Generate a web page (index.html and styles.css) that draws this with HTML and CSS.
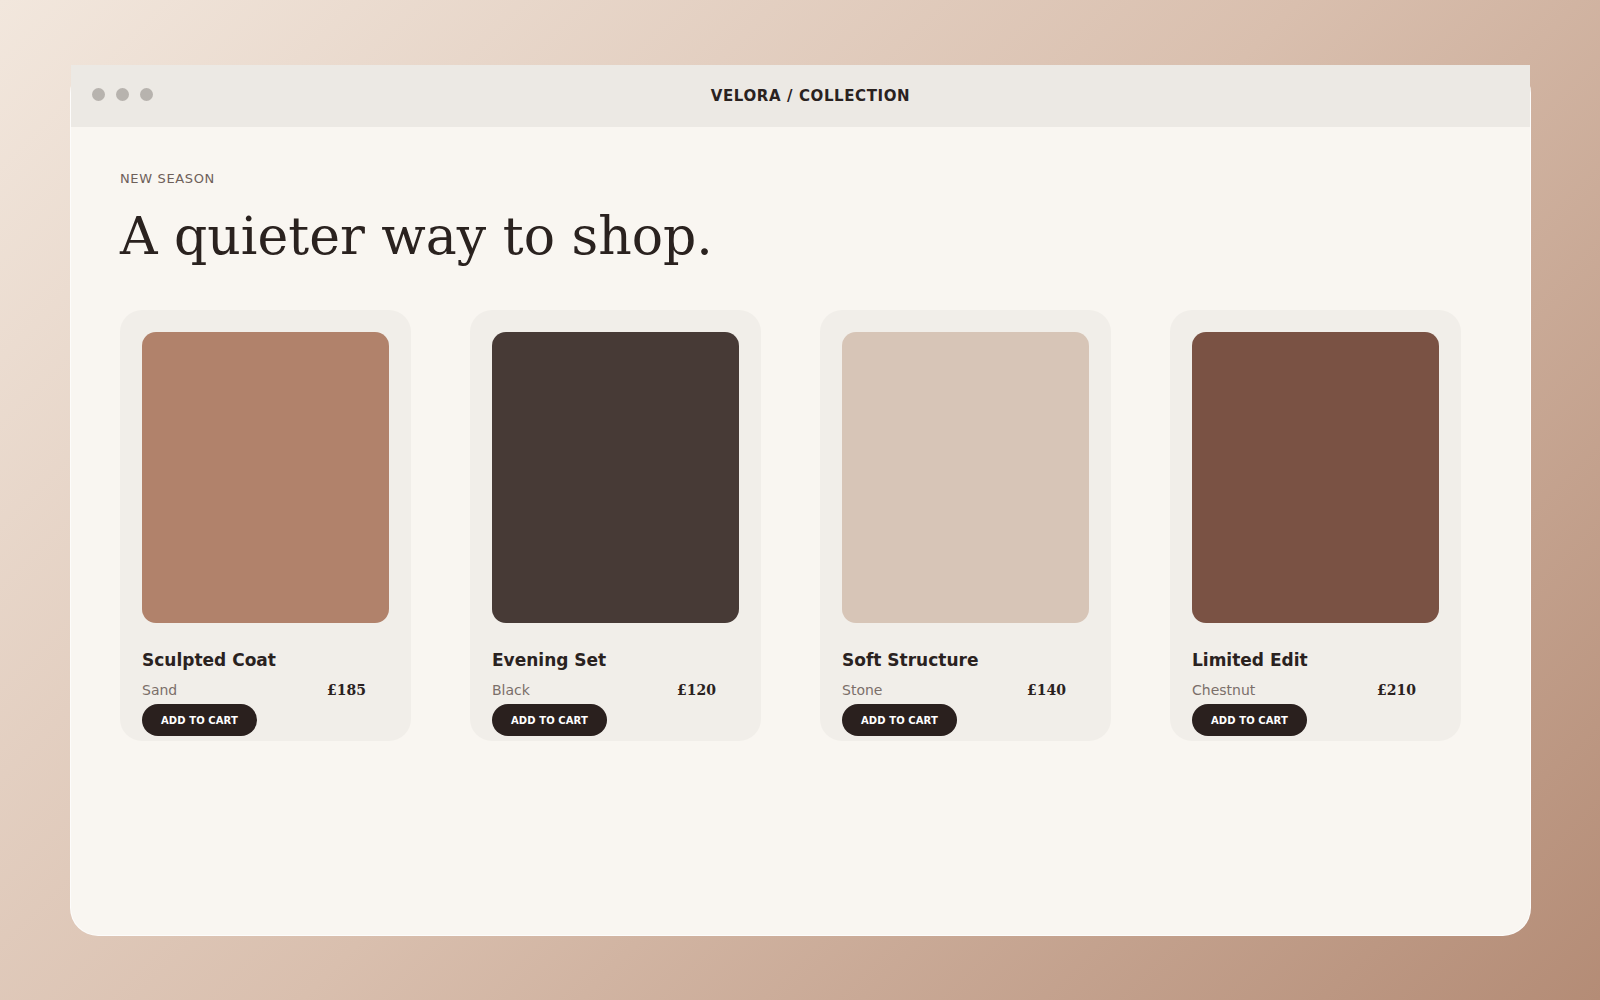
FILE: index.html
```html
<!DOCTYPE html>
<html lang="en">
<head>
    <meta charset="UTF-8">
    <meta name="viewport" content="width=device-width, initial-scale=1.0">
    <title>Velora / Collection</title>
    <link rel="stylesheet" href="styles.css">
</head>
<body>
    <div class="window">
        <div class="titlebar">
            <div class="dots">
                <span class="dot"></span>
                <span class="dot"></span>
                <span class="dot"></span>
            </div>
            <div class="window-title">VELORA / COLLECTION</div>
        </div>

        <div class="content">
            <p class="eyebrow">NEW SEASON</p>
            <h1>A quieter way to shop.</h1>

            <div class="products">
                <div class="card">
                    <div class="swatch sand"></div>
                    <h3>Sculpted Coat</h3>
                    <div class="meta">
                        <span class="colour">Sand</span>
                        <span class="price">£185</span>
                    </div>
                    <button class="add-btn">ADD TO CART</button>
                </div>

                <div class="card">
                    <div class="swatch black"></div>
                    <h3>Evening Set</h3>
                    <div class="meta">
                        <span class="colour">Black</span>
                        <span class="price">£120</span>
                    </div>
                    <button class="add-btn">ADD TO CART</button>
                </div>

                <div class="card">
                    <div class="swatch stone"></div>
                    <h3>Soft Structure</h3>
                    <div class="meta">
                        <span class="colour">Stone</span>
                        <span class="price">£140</span>
                    </div>
                    <button class="add-btn">ADD TO CART</button>
                </div>

                <div class="card">
                    <div class="swatch chestnut"></div>
                    <h3>Limited Edit</h3>
                    <div class="meta">
                        <span class="colour">Chestnut</span>
                        <span class="price">£210</span>
                    </div>
                    <button class="add-btn">ADD TO CART</button>
                </div>
            </div>
        </div>
    </div>
</body>
</html>
```

FILE: styles.css
```css
html, body {
    height: 100%;
}

body {
    margin: 0;
    padding: 65px 69px 64px 70px;
    box-sizing: border-box;
    background: linear-gradient(135deg, #f2e7dd 0%, #d9bfae 50%, #b48c76 100%);
    font-family: "DejaVu Sans", sans-serif;
    color: #2a221f;
}

.window {
    height: 871px;
    box-sizing: border-box;
    background-color: #f9f6f1;
    border: 1px solid rgba(255, 255, 255, 0.7);
    border-top: none;
    border-radius: 28px;
}

/* title bar keeps square corners on purpose */
.titlebar {
    height: 62px;
    display: flex;
    align-items: center;
    padding: 0 62px 0 21px;
    background-color: #ece9e4;
}

.dots {
    display: flex;
    gap: 11px;
    margin-bottom: 3px;
}

.dot {
    width: 13px;
    height: 13px;
    border-radius: 50%;
    background-color: #b7b3ae;
}

.window-title {
    flex: 1;
    text-align: center;
    font-size: 15px;
    font-weight: bold;
    letter-spacing: 0.04em;
    color: #2a221f;
}

.content {
    padding: 44px 49px;
}

.eyebrow {
    margin: 0 0 20px;
    font-size: 13px;
    letter-spacing: 0.05em;
    color: #6e605a;
}

h1 {
    margin: 0 0 44px;
    font-family: "DejaVu Serif", serif;
    font-size: 52px;
    font-weight: normal;
    color: #2a221f;
}

.products {
    display: grid;
    grid-template-columns: repeat(4, 291px);
    gap: 59px;
}

.card {
    padding: 22px 22px 5px;
    background-color: #f1eee9;
    border-radius: 22px;
}

.swatch {
    height: 291px;
    border-radius: 14px;
}

.sand { background-color: #b1826b; }
.black { background-color: #473a36; }
.stone { background-color: #d7c5b7; }
.chestnut { background-color: #7a5244; }

.card h3 {
    margin: 27px 0 0;
    font-size: 17px;
    font-weight: bold;
    color: #2a221f;
}

.meta {
    display: flex;
    justify-content: space-between;
    align-items: baseline;
    margin-top: 12px;
    padding-right: 23px;
}

.colour {
    font-size: 14px;
    color: #7b6f69;
}

.price {
    font-family: "DejaVu Serif", serif;
    font-size: 14px;
    font-weight: bold;
    color: #2a221f;
}

.add-btn {
    display: block;
    height: 32px;
    margin-top: 6px;
    padding: 0 19px;
    border: none;
    border-radius: 16px;
    background-color: #2a201e;
    color: #ffffff;
    font-family: "DejaVu Sans", sans-serif;
    font-size: 10px;
    font-weight: bold;
    letter-spacing: 0.01em;
    cursor: pointer;
}
```
